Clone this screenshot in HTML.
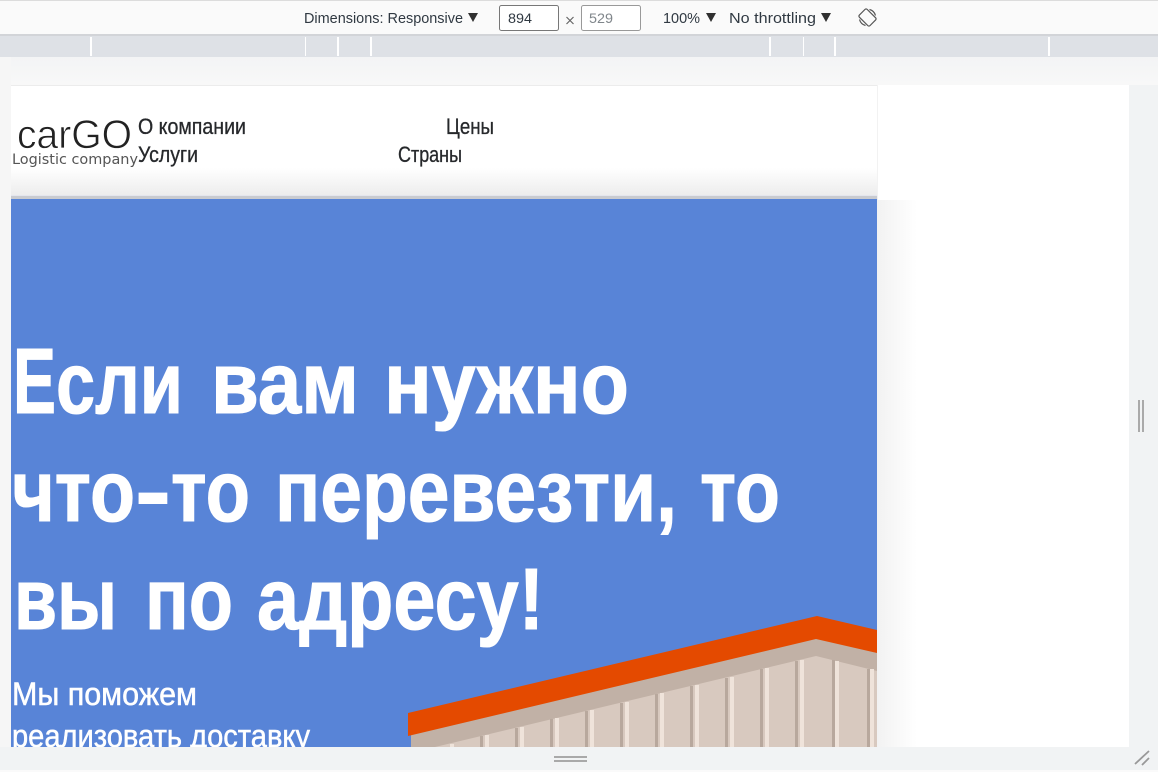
<!DOCTYPE html>
<html lang="ru"><head><meta charset="utf-8"><title>carGO</title>
<style>
html,body{margin:0;padding:0;width:1158px;height:772px;overflow:hidden;background:#fff}
svg{display:block;position:absolute;left:0;top:0}
</style></head><body>
<svg width="1158" height="772" viewBox="0 0 1158 772" xmlns="http://www.w3.org/2000/svg">
<defs>
<linearGradient id="top" x1="0" y1="0" x2="0" y2="1"><stop offset="0" stop-color="#f3f4f5"/><stop offset="1" stop-color="#f8f8f8"/></linearGradient>
<linearGradient id="hd" x1="0" y1="0" x2="0" y2="1"><stop offset="0" stop-color="#fff"/><stop offset="1" stop-color="#ededed"/></linearGradient>
<linearGradient id="sh" x1="0" y1="0" x2="1" y2="0"><stop offset="0" stop-color="#f2f2f2"/><stop offset="1" stop-color="#fff"/></linearGradient>
<clipPath id="pg"><rect x="11" y="199" width="866" height="548"/></clipPath>
</defs>

<!-- devtools toolbar -->
<rect width="1158" height="35" fill="#fafafa"/>
<rect width="1158" height="1" fill="#dcdcdc"/>
<rect y="34" width="1158" height="2" fill="#d2d4d8"/>
<rect y="36" width="1158" height="21" fill="#dee1e6"/>
<g fill="#fff">
<rect x="90" y="37" width="2" height="19"/><rect x="305" y="37" width="1" height="19"/><rect x="337" y="37" width="2" height="19"/><rect x="370" y="37" width="2" height="19"/>
<rect x="769" y="37" width="2" height="19"/><rect x="803" y="37" width="1" height="19"/><rect x="834" y="37" width="2" height="19"/><rect x="1048" y="37" width="2" height="19"/>
</g>
<rect y="57" width="1158" height="28" fill="url(#top)"/>
<rect y="57" width="11" height="690" fill="#f6f6f6"/>

<g font-family="'Liberation Sans',sans-serif" font-size="15" fill="#303942">
<text x="304" y="23" textLength="159" lengthAdjust="spacingAndGlyphs">Dimensions: Responsive</text>
<text x="663" y="23" textLength="37" lengthAdjust="spacingAndGlyphs">100%</text>
<text x="729" y="23" textLength="87" lengthAdjust="spacingAndGlyphs">No throttling</text>
</g>
<g fill="#303030">
<path d="M468 13h10l-5 9z"/><path d="M706 13h10l-5 9z"/><path d="M821 13h10l-5 9z"/>
</g>
<rect x="499.500" y="5.500" width="59" height="25" rx="2" fill="#fff" stroke="#777"/>
<rect x="581.500" y="5.500" width="59" height="25" rx="2" fill="#fff" stroke="#999"/>
<text x="508" y="23" font-family="'Liberation Sans',sans-serif" font-size="14" fill="#303942" textLength="24" lengthAdjust="spacingAndGlyphs">894</text>
<text x="589" y="23" font-family="'Liberation Sans',sans-serif" font-size="14" fill="#80868b" textLength="24" lengthAdjust="spacingAndGlyphs">529</text>
<path d="M566.500 17l7 7m0-7l-7 7" stroke="#666" stroke-width="1.200" fill="none"/>
<g fill="none" stroke="#555" stroke-width="1.200">
<rect x="862" y="10" width="11" height="15" rx="1.500" transform="rotate(-45 867.500 17.500)"/>
<path d="M869.500 9.500A8.500 8.500 0 0 1 875.500 15.500M865.500 25.500A8.500 8.500 0 0 1 859.500 19.500"/>
</g>

<!-- page: right side -->
<rect x="877" y="85" width="253" height="662" fill="#fff"/>
<rect x="877" y="200" width="40" height="547" fill="url(#sh)"/>
<rect x="1129" y="85" width="29" height="662" fill="#f1f3f4"/>
<rect x="1138" y="400" width="2" height="32" fill="#aaa"/><rect x="1142" y="400" width="2" height="32" fill="#aaa"/>

<!-- header -->
<rect x="11" y="85" width="866" height="115" fill="#fff"/>
<rect x="11" y="85" width="866" height="1" fill="#ececec"/>
<rect x="11" y="168" width="866" height="27" fill="url(#hd)"/>
<rect x="11" y="195" width="866" height="4" fill="#c9cbd0"/>
<rect x="11" y="195" width="866" height="1" fill="#e4e6ee"/>
<rect x="877" y="85" width="1" height="115" fill="#f2f2f2"/>

<text x="17" y="148" font-family="'Liberation Sans',sans-serif" font-size="40" fill="#222" stroke="#fff" stroke-width=".7" textLength="115" lengthAdjust="spacingAndGlyphs">carGO</text>
<text x="12" y="164" font-family="'DejaVu Sans',sans-serif" font-size="14" fill="#555" textLength="126" lengthAdjust="spacingAndGlyphs">Logistic company</text>

<g font-family="'Liberation Sans',sans-serif" font-size="22" fill="#26282b" stroke="#26282b" stroke-width=".3">
<text x="138" y="134" textLength="108" lengthAdjust="spacingAndGlyphs">О компании</text>
<text x="446" y="134" textLength="48" lengthAdjust="spacingAndGlyphs">Цены</text>
<text x="138" y="162" textLength="60" lengthAdjust="spacingAndGlyphs">Услуги</text>
<text x="398" y="162" textLength="64" lengthAdjust="spacingAndGlyphs">Страны</text>
</g>

<!-- hero -->
<rect x="11" y="199" width="866" height="548" fill="#5884d7"/>
<g font-family="'Liberation Sans',sans-serif" font-weight="700" font-size="87" fill="#fff" stroke="#fff" stroke-width="1">
<text x="13" y="413" font-size="93" textLength="43" lengthAdjust="spacingAndGlyphs">Е</text>
<text x="56" y="413" textLength="127" lengthAdjust="spacingAndGlyphs">сли</text>
<text x="211" y="413" textLength="148" lengthAdjust="spacingAndGlyphs">вам</text>
<text x="384" y="413" textLength="245" lengthAdjust="spacingAndGlyphs">нужно</text>
<text x="12" y="521" textLength="123" lengthAdjust="spacingAndGlyphs">что</text>
<text x="135" y="521" textLength="36" lengthAdjust="spacingAndGlyphs">-</text>
<text x="171" y="521" textLength="79" lengthAdjust="spacingAndGlyphs">то</text>
<text x="275" y="521" textLength="402" lengthAdjust="spacingAndGlyphs">перевезти,</text>
<text x="700" y="521" textLength="80" lengthAdjust="spacingAndGlyphs">то</text>
<text x="14" y="629" textLength="103" lengthAdjust="spacingAndGlyphs">вы</text>
<text x="145" y="629" textLength="88" lengthAdjust="spacingAndGlyphs">по</text>
<text x="257" y="629" textLength="287" lengthAdjust="spacingAndGlyphs">адресу!</text>
</g>
<g clip-path="url(#pg)">
<g font-family="'Liberation Sans',sans-serif" font-size="32" fill="#fff" stroke="#fff" stroke-width=".5">
<text x="12" y="705" textLength="185" lengthAdjust="spacingAndGlyphs">Мы поможем</text>
<text x="12" y="747" textLength="298" lengthAdjust="spacingAndGlyphs">реализовать доставку</text>
</g>
<!-- warehouse -->
<path d="M411 733L816 636L877 650V747H411Z" fill="#c1b1a6"/>
<path d="M435 747L816 656L877 671V747Z" fill="#d8c9bf"/>
<g fill="#efe3da">
<rect x="450" y="744" width="4" height="3"/><rect x="485" y="735" width="4" height="12"/><rect x="520" y="727" width="4" height="20"/><rect x="555" y="718" width="4" height="29"/><rect x="590" y="710" width="4" height="37"/><rect x="625" y="702" width="4" height="45"/><rect x="660" y="693" width="4" height="54"/><rect x="695" y="685" width="4" height="62"/><rect x="730" y="677" width="4" height="70"/><rect x="765" y="668" width="4" height="79"/><rect x="800" y="660" width="4" height="87"/><rect x="835" y="661" width="4" height="86"/><rect x="870" y="669" width="4" height="78"/>
</g>
<g fill="#b8a89d">
<rect x="480" y="736" width="3" height="11"/><rect x="515" y="728" width="3" height="19"/><rect x="550" y="719" width="3" height="28"/><rect x="585" y="711" width="3" height="36"/><rect x="620" y="703" width="3" height="44"/><rect x="655" y="694" width="3" height="53"/><rect x="690" y="686" width="3" height="61"/><rect x="725" y="678" width="3" height="69"/><rect x="760" y="669" width="3" height="78"/><rect x="795" y="661" width="3" height="86"/><rect x="832" y="660" width="3" height="87"/><rect x="867" y="669" width="3" height="78"/>
</g>
<path d="M408 713L817 616L877 630V653L816 639L408 736Z" fill="#e44a00"/>
</g>

<!-- bottom bar -->
<rect y="747" width="1158" height="25" fill="#f1f3f4"/>
<rect y="770" width="1158" height="2" fill="#fafafa"/>
<rect x="554" y="756" width="33" height="2" fill="#a9a9a9"/><rect x="554" y="760" width="33" height="2" fill="#a9a9a9"/>
<path d="M1135 764L1149 751M1142 765L1149 758" stroke="#999" stroke-width="1.800" fill="none"/>
</svg>
</body></html>
